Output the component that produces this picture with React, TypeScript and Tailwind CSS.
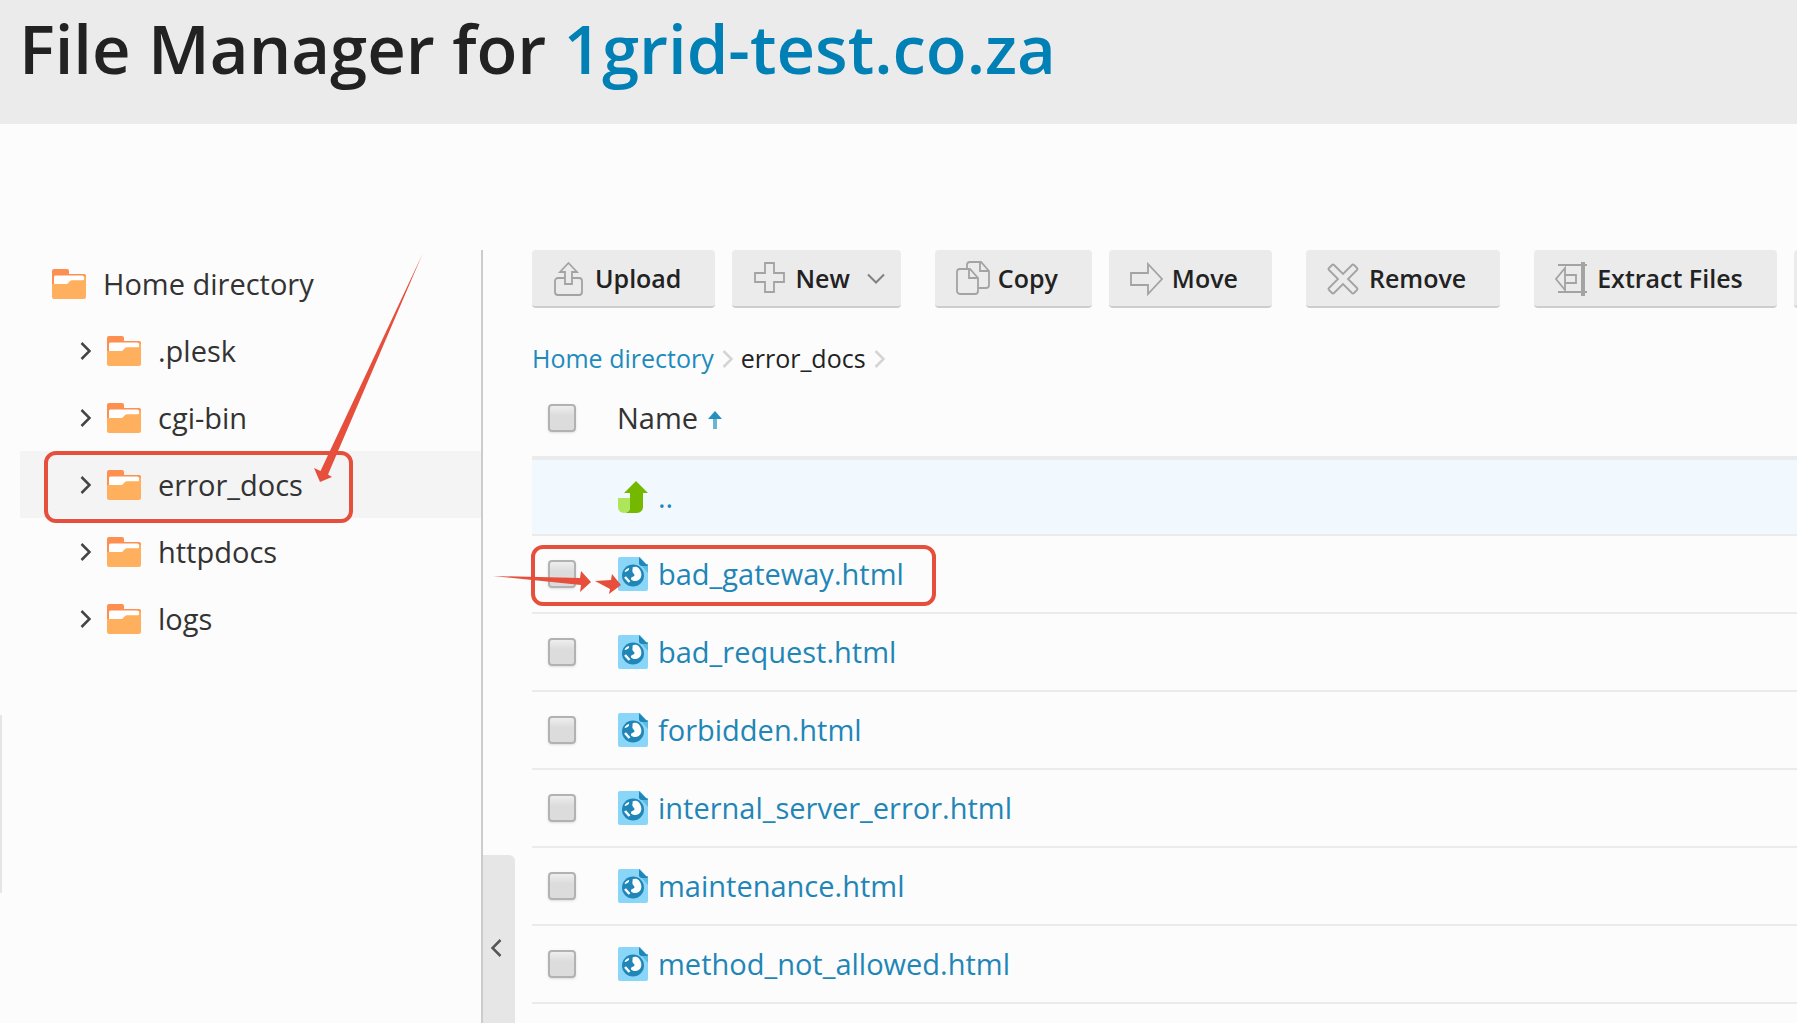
import type { ReactNode } from "react";

function FolderIcon() {
  return (
    <svg width="34" height="30" viewBox="0 0 34 30" className="shrink-0" aria-hidden="true">
      <path d="M0 2a2 2 0 0 1 2-2h13a2 2 0 0 1 2 2v3h15a2 2 0 0 1 2 2v10H0z" fill="#fd8f50" />
      <path d="M2 8a1.500 1.500 0 0 1 1.500-1.500h27a1.500 1.500 0 0 1 1.500 1.500V14l-16 2H2z" fill="#fff" />
      <path d="M0 15h15l3-3a3 3 0 0 1 2-.8h11a2 2 0 0 0 1-.5V7l2 1v20a2 2 0 0 1-2 2H2a2 2 0 0 1-2-2z" fill="#ffb05e" />
    </svg>
  );
}

function Chevron({ className, dir }: { className: string; dir: "left" | "right" | "down" }) {
  if (dir === "down")
    return (
      <svg width="18" height="12" viewBox="0 0 18 12" className={className} fill="none" stroke="currentColor" aria-hidden="true">
        <path d="M1 1.500l8 8 8-8" strokeWidth="2" />
      </svg>
    );
  return (
    <svg width="11" height="18" viewBox="0 0 11 18" className={className} fill="none" stroke="currentColor" aria-hidden="true">
      <path d={dir === "right" ? "M1.500 1l8 8-8 8" : "M9.500 1l-8 8 8 8"} strokeWidth="2.500" />
    </svg>
  );
}

function FileIcon() {
  return (
    <svg width="30" height="34" viewBox="0 0 30 34" className="shrink-0" aria-hidden="true">
      <path d="M2 0h20l8 9v23a2 2 0 0 1-2 2H2a2 2 0 0 1-2-2V2a2 2 0 0 1 2-2z" fill="#8ad6f8" />
      <path d="M22 7h8v9z" fill="#5cbbe3" />
      <path d="M21 0l9 9h-6a3 3 0 0 1-3-3z" fill="#1f86b7" />
      <circle cx="15" cy="18.500" r="11" fill="#1f86b7" />
      <path d="M14.500 10.500c2-1.500 5-1 6.500 1 2 2.500 3 6 2 8.500-1 3-4 4.500-7 4-2-.3-3.500-1.500-3-3 .5-1.300 3-1 3.500-2.500.3-1.500-1.500-2-2-3.500-.5-1.700.5-3 0-4.500z" fill="#fff" />
      <path d="M6.500 14.500c1-2 2.500-3 4.500-3.500.5 1.500-.5 2.500-1.500 3s-2 1.500-3 .5z" fill="#fff" />
      <path d="M7 20l4.500 5" stroke="#fff" strokeWidth="2.500" />
    </svg>
  );
}

function UpIcon() {
  return (
    <svg width="30" height="32" viewBox="0 0 30 32" className="shrink-0" aria-hidden="true">
      <path d="M6 32c4 0 6-3 6-6V12H6L18 0l12 12h-5v14a6 6 0 0 1-6 6z" fill="#74b800" />
      <path d="M0 17h12v9a6 6 0 0 1-6 6 6 6 0 0 1-6-6z" fill="#ade65a" />
    </svg>
  );
}

function ToolIcon({ children }: { children: ReactNode }) {
  return (
    <svg width="36" height="36" viewBox="0 0 36 36" className="shrink-0" fill="none" stroke="#a3a3a3" strokeWidth="1.800" aria-hidden="true">
      {children}
    </svg>
  );
}

const icons = {
  upload: (
    <ToolIcon>
      <path d="M12 17H5a3 3 0 0 0-3 3v11a3 3 0 0 0 3 3h21a3 3 0 0 0 3-3V20a3 3 0 0 0-3-3h-7" />
      <path d="M15.500 2l8.500 9h-5v12h-7V11H7z" />
    </ToolIcon>
  ),
  plus: (
    <ToolIcon>
      <path d="M12 2h9v10h10v9H21v10h-9V21H2v-9h10z" />
    </ToolIcon>
  ),
  copy: (
    <ToolIcon>
      <path d="M11 8V4a3 3 0 0 1 3-3h11l8 9v14a3 3 0 0 1-3 3h-7M24 1v9h9" />
      <path d="M4 8h10l8 9v13a3 3 0 0 1-3 3H4a3 3 0 0 1-3-3V11a3 3 0 0 1 3-3zM13 8v9h9" />
    </ToolIcon>
  ),
  move: (
    <ToolIcon>
      <path d="M1 12h17V3l14 15-14 15v-9H1z" />
    </ToolIcon>
  ),
  remove: (
    <ToolIcon>
      <path d="M2 7l3-3q1-1 2 0l9 9 9-9q1-1 2 0l3 3q1 1 0 2l-9 9 9 9q1 1 0 2l-3 3q-1 1-2 0l-9-9-9 9q-1 1-2 0l-3-3q-1-1 0-2l9-9-9-9q-1-1 0-2z" />
    </ToolIcon>
  ),
  extract: (
    <ToolIcon>
      <path d="M3 4h29M3 31h29" />
      <path d="M28 1v34" strokeWidth="4" />
      <path d="M10 7v22L1 18zM10 14h11v8H10" />
    </ToolIcon>
  ),
};

function ToolButton({ icon, label, menu = false }: { icon: ReactNode; label: string; menu?: boolean }) {
  return (
    <button
      type="button"
      className={
        "flex h-[58px] shrink-0 items-center gap-[6px] rounded-[4px] border-b-2 border-[#cdcdcd] bg-[#ebebeb] pt-[2px] pl-[21px] text-[25px] font-semibold text-[#222] " +
        (menu ? "pr-4" : "pr-[34px]")
      }
    >
      {icon}
      <span>{label}</span>
      {menu && <Chevron dir="down" className="ml-[11px] text-[#808080]" />}
    </button>
  );
}

function Check({ label }: { label: string }) {
  return (
    <input
      type="checkbox"
      aria-label={label}
      className="block size-7 appearance-none rounded-[4px] border-2 border-[#b2b2b2] bg-linear-to-b from-[#eeeeee] to-[#dcdcdc] to-40% shadow-sm"
    />
  );
}

const folders = [".plesk", "cgi-bin", "error_docs", "httpdocs", "logs"];
const files = [
  "bad_gateway.html",
  "bad_request.html",
  "forbidden.html",
  "internal_server_error.html",
  "maintenance.html",
  "method_not_allowed.html",
];

function Tree() {
  return (
    <nav aria-label="Directories" className="w-[481px] shrink-0 pl-5 text-[29px] text-[#333]">
      <a href="#home" className="flex h-[67px] items-center gap-[17px] pl-8">
        <FolderIcon />
        Home directory
      </a>
      <ul>
        {folders.map((name) => {
          const active = name === "error_docs";
          return (
            <li key={name} className={active ? "relative bg-[#f4f4f4]" : ""}>
              <a href={"#" + name} className="flex h-[67px] items-center pl-[60px]">
                <Chevron dir="right" className="mr-4 text-[#444]" />
                <FolderIcon />
                <span className="ml-[17px]">{name}</span>
              </a>
              {active && (
                <>
                  <span className="pointer-events-none absolute top-0 left-6 h-[72px] w-[309px] rounded-[12px] border-4 border-[#e64f3c]" />
                  <svg width="112" height="230" viewBox="0 0 112 230" className="pointer-events-none absolute bottom-9 left-[292px]" aria-hidden="true">
                    <path d="M110.500 2L8.500 219 2 216l6 14 12-5-4-2.500z" fill="#e64f3c" />
                  </svg>
                </>
              )}
            </li>
          );
        })}
      </ul>
    </nav>
  );
}

function Breadcrumbs() {
  return (
    <nav aria-label="Path" className="mt-[31px] flex h-10 items-center text-[25px]">
      <a href="#home" className="text-[#1c8bbd]">Home directory</a>
      <Chevron dir="right" className="mx-2 text-[#d4d4d4]" />
      <span className="text-[#222]">error_docs</span>
      <Chevron dir="right" className="mx-2 text-[#d4d4d4]" />
    </nav>
  );
}

function FileTable() {
  return (
    <table className="w-full border-separate border-spacing-0 text-left text-[29px]">
      <thead>
        <tr>
          <th className="h-[81px] w-[86px] border-b-4 border-[#ebebeb] pl-4">
            <Check label="Select all" />
          </th>
          <th className="border-b-4 border-[#ebebeb] font-normal text-[#333]">
            <button type="button" className="-ml-px flex items-center gap-[10px]">
              Name
              <svg width="14" height="18" viewBox="0 0 14 18" className="mt-1" aria-hidden="true">
                <path d="M7 18V3" stroke="#6bb4d3" strokeWidth="4" />
                <path d="M7 0l7 8H0z" fill="#2590bf" />
              </svg>
            </button>
          </th>
        </tr>
      </thead>
      <tbody className="text-[#1f86b7]">
        <tr className="bg-[#f1f9ff]">
          <td className="h-[76px] border-b-2 border-[#ebebeb]" />
          <td className="border-b-2 border-[#ebebeb]">
            <a href="#up" className="flex items-center gap-[10px]">
              <UpIcon />
              ..
            </a>
          </td>
        </tr>
        {files.map((name, i) => (
          <tr key={name}>
            <td className="relative h-[78px] border-b-2 border-[#ebebeb] pl-4">
              <Check label={name} />
              {i === 0 && (
                <>
                  <span className="pointer-events-none absolute top-[9px] -left-px z-10 h-[61px] w-[405px] rounded-[12px] border-4 border-[#e64f3c]" />
                  <svg width="130" height="24" viewBox="0 0 130 24" className="pointer-events-none absolute top-[35px] -left-[39px] z-10" fill="#e64f3c" aria-hidden="true">
                    <path d="M0 5l87 2 1-7 10 11-11 10 1-7z" />
                    <path d="M102 10l16-1 1-6 9 11-12 9 1-5z" />
                  </svg>
                </>
              )}
            </td>
            <td className="border-b-2 border-[#ebebeb]">
              <a href={"#" + name} className="flex items-center gap-[10px]">
                <FileIcon />
                {name}
              </a>
            </td>
          </tr>
        ))}
      </tbody>
    </table>
  );
}

export default function App() {
  return (
    <div className="relative flex min-h-screen flex-col overflow-hidden bg-[#fcfcfc] font-['Open_Sans',sans-serif]">
      <header className="h-[124px] bg-[#ebebeb] pl-[19px]">
        <h1 className="text-[67px] leading-[96px] font-semibold whitespace-nowrap text-[#222]">
          File Manager for{" "}
          <a href="#domain" className="text-[#0080b5]">1grid-test.co.za</a>
        </h1>
      </header>
      <span className="absolute top-[715px] left-0 h-[178px] w-[2px] bg-[#e5e5e5]" />
      <div className="flex flex-1 pt-[126px]">
        <Tree />
        <div className="flex w-[51px] shrink-0 flex-col justify-end border-l-2 border-[#cccccc]">
          <button type="button" aria-label="Collapse sidebar" className="flex h-[168px] w-[32px] justify-center rounded-tr-[6px] bg-[#e6e6e6] pt-[84px]">
            <Chevron dir="left" className="mr-[6px] text-[#555]" />
          </button>
        </div>
        <main className="min-w-0 flex-1">
          <div className="flex">
            <div className="flex shrink-0 gap-[17px]">
              <ToolButton icon={icons.upload} label="Upload" />
              <ToolButton icon={icons.plus} label="New" menu />
            </div>
            <div className="ml-[34px] flex shrink-0 gap-[17px]">
              <ToolButton icon={icons.copy} label="Copy" />
              <ToolButton icon={icons.move} label="Move" />
            </div>
            <div className="ml-[34px] flex shrink-0">
              <ToolButton icon={icons.remove} label="Remove" />
            </div>
            <div className="ml-[34px] flex shrink-0 gap-[17px]">
              <ToolButton icon={icons.extract} label="Extract Files" />
              <button type="button" aria-label="More" className="h-[58px] w-20 rounded-[4px] border-b-2 border-[#cdcdcd] bg-[#ebebeb]" />
            </div>
          </div>
          <Breadcrumbs />
          <FileTable />
        </main>
      </div>
    </div>
  );
}
